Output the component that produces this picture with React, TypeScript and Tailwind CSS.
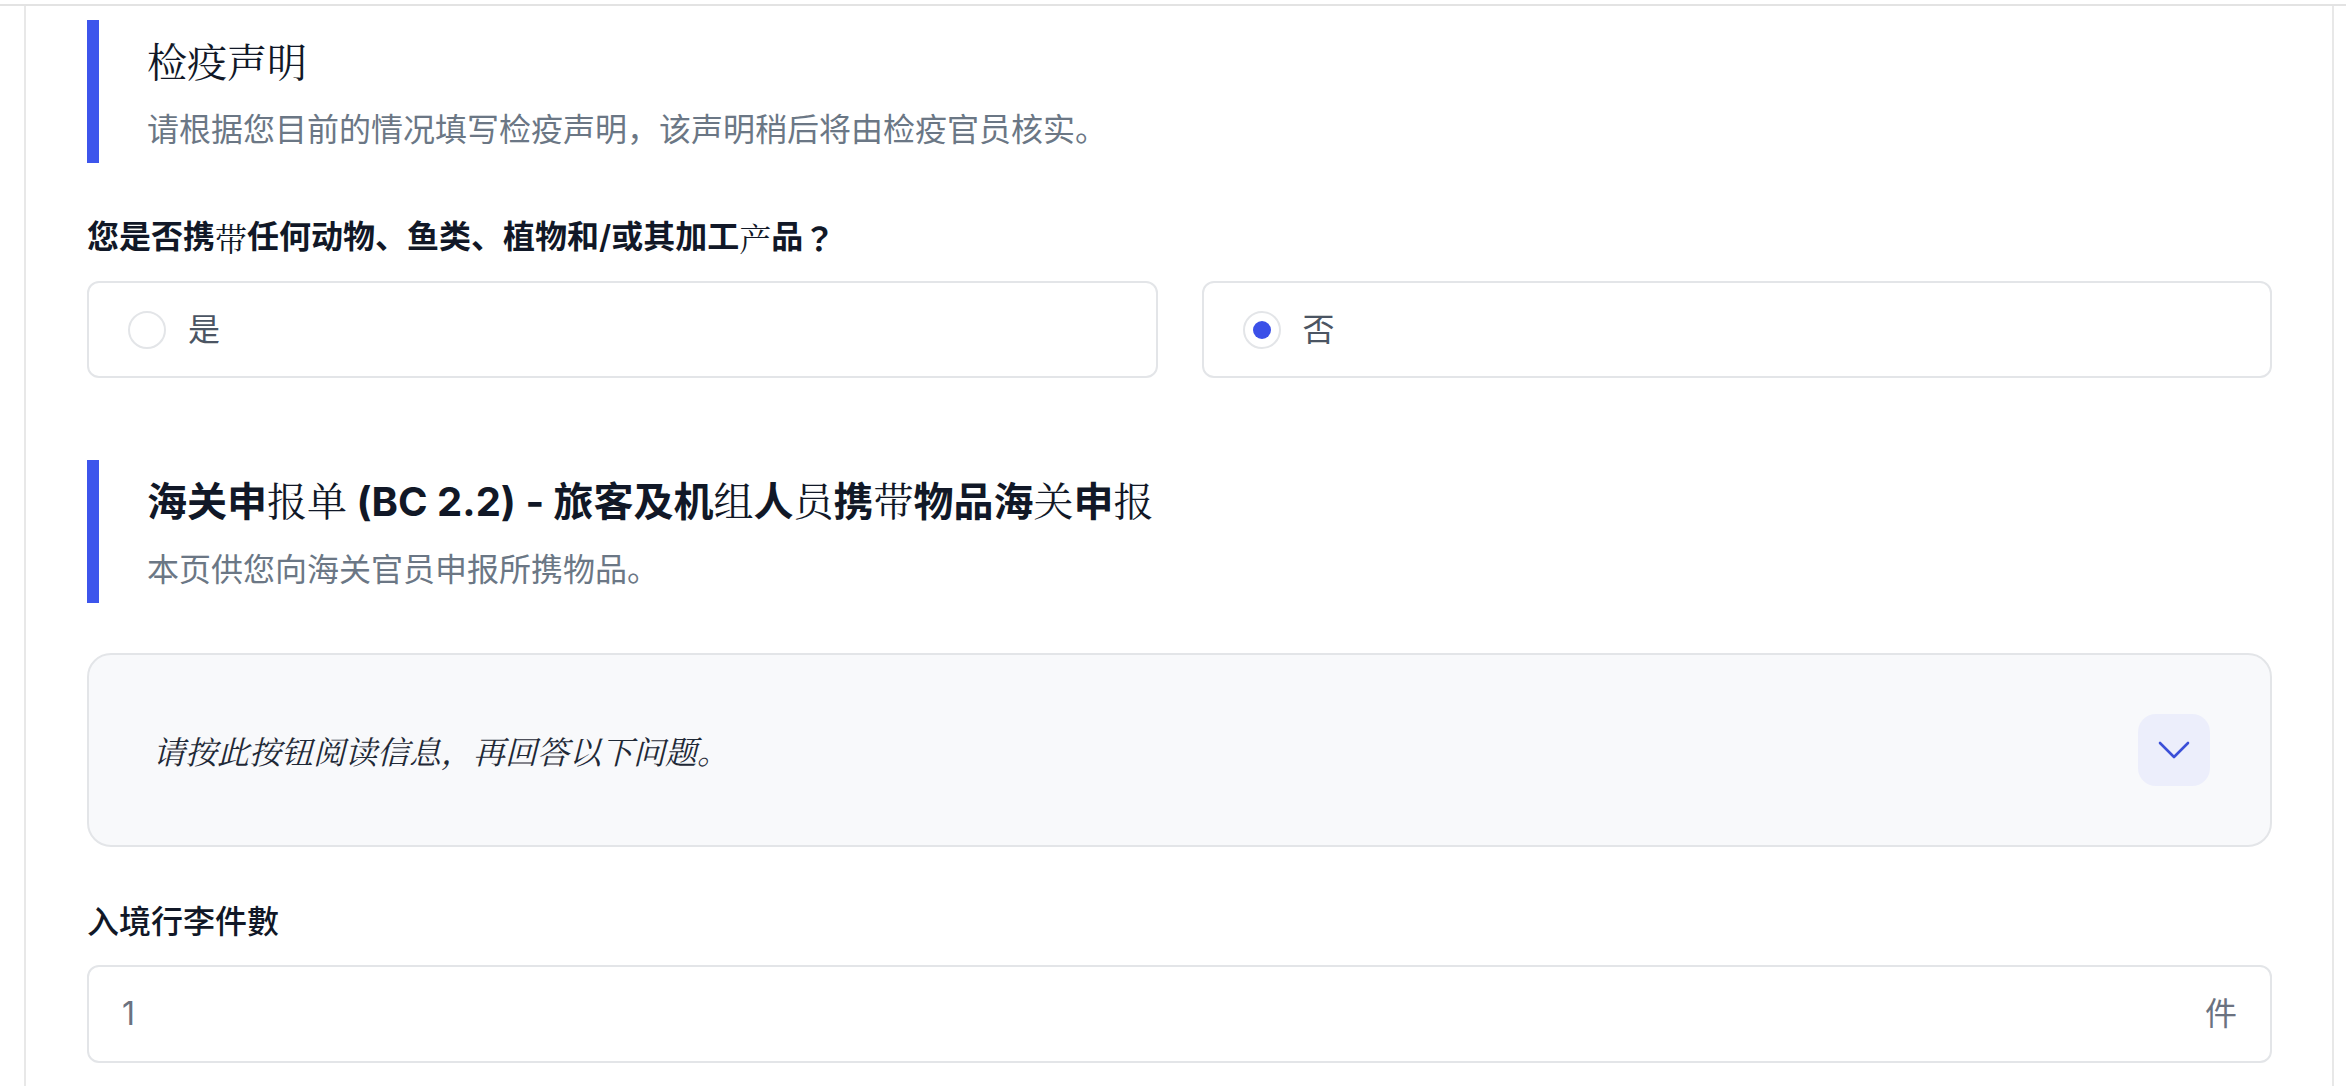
import React from "react";

const SANS = '"Inter", "Noto Sans CJK SC", "Noto Sans", sans-serif';
const SERIF = '"Noto Serif CJK SC", "Liberation Serif", serif';
const CJK_TC = '"Noto Sans CJK TC", "Noto Sans CJK SC", sans-serif';

// pieces of a heading: [text, thin?]
type Piece = [string, boolean];

function Mixed({ pieces }: { pieces: Piece[] }) {
  return (
    <>
      {pieces.map(([t, thin], i) =>
        thin ? (
          <span key={i} className="font-normal" style={{ fontFamily: SERIF }}>
            {t}
          </span>
        ) : (
          <span key={i}>{t}</span>
        )
      )}
    </>
  );
}

function SectionHeader({ title, sub }: { title: React.ReactNode; sub: string }) {
  return (
    <div className="flex">
      <div className="w-[12px] shrink-0 bg-[#3d55ec]" />
      <div className="pl-[48px] pt-[14px] pb-[11px]">
        <h2 className="flex h-[52px] items-center whitespace-pre text-[40px] leading-[52px] text-[#111827]">{title}</h2>
        <p className="mt-[22px] flex h-[44px] items-center text-[32px] leading-[44px] text-[#6b7785]">{sub}</p>
      </div>
    </div>
  );
}

function RadioCard({ label, checked }: { label: string; checked?: boolean }) {
  return (
    <div className="flex h-[97px] items-center gap-[22px] rounded-[12px] border-2 border-[#e3e5e8] bg-white px-[39px]">
      <span className="flex h-[38px] w-[38px] items-center justify-center rounded-full border-2 border-[#e3e5e8] bg-white">
        {checked && <span className="h-[18px] w-[18px] rounded-full bg-[#3b50e8]" />}
      </span>
      <span className="text-[32px] leading-[44px] text-[#4b5563]">{label}</span>
    </div>
  );
}

export default function App() {
  return (
    <div className="min-h-screen bg-white" style={{ fontFamily: SANS }}>
      <div className="h-[6px] border-b-2 border-[#e3e3e3]" />
      <div className="ml-[24px] mr-[12px] border-x-2 border-[#e8e8e8] pl-[61px] pr-[60px] pt-[14px] pb-[40px]">
        {/* Quarantine */}
        <SectionHeader
          title={
            <span className="font-normal" style={{ fontFamily: SERIF }}>
              检疫声明
            </span>
          }
          sub="请根据您目前的情况填写检疫声明，该声明稍后将由检疫官员核实。"
        />

        <p className="mt-[52px] flex h-[44px] items-center whitespace-pre text-[32px] leading-[44px] font-semibold text-[#111827]">
          <Mixed
            pieces={[
              ["您是否携", false],
              ["带", true],
              ["任何动物、鱼类、植物和/或其加工", false],
              ["产", true],
              ["品", false],
            ]}
          />
          <span style={{ fontFamily: CJK_TC }}>？</span>
        </p>

        <div className="mt-[22px] grid grid-cols-2 gap-[44px]">
          <RadioCard label="是" />
          <RadioCard label="否" checked />
        </div>

        {/* Customs */}
        <div className="mt-[82px]">
          <SectionHeader
            title={
              <span className="font-bold">
                <Mixed
                  pieces={[
                    ["海关申", false],
                    ["报单", true],
                    [" (BC 2.2) - 旅客及机", false],
                    ["组", true],
                    ["人", false],
                    ["员", true],
                    ["携", false],
                    ["带", true],
                    ["物品海", false],
                    ["关", true],
                    ["申", false],
                    ["报", true],
                  ]}
                />
              </span>
            }
            sub="本页供您向海关官员申报所携物品。"
          />
        </div>

        <div className="mt-[50px] flex h-[194px] items-center justify-between rounded-[24px] border-2 border-[#e3e5e8] bg-[#f8f9fb] pl-[64px] pr-[60px]">
          <p className="text-[32px] italic leading-[44px] text-[#1f2937]" style={{ fontFamily: SERIF }}>
            请按此按钮阅读信息，再回答以下问题。
          </p>
          <button className="flex h-[72px] w-[72px] items-center justify-center rounded-[18px] bg-[#eceefb]">
            <svg width="32" height="18" viewBox="0 0 32 18" fill="none">
              <polyline
                points="2,2 16,16 30,2"
                stroke="#3b4fd8"
                strokeWidth="2.6"
                strokeLinecap="round"
                strokeLinejoin="round"
              />
            </svg>
          </button>
        </div>

        <p className="mt-[53px] flex h-[44px] items-center text-[32px] leading-[44px] font-medium text-[#111827]">入境行李件數</p>

        <div className="mt-[21px] flex h-[98px] items-center justify-between rounded-[12px] border-2 border-[#e3e5e8] bg-white px-[33px]">
          <span className="text-[32px] leading-[44px] text-[#6b7280]">1</span>
          <span className="text-[32px] leading-[44px] text-[#6b7280]">件</span>
        </div>
      </div>
    </div>
  );
}
